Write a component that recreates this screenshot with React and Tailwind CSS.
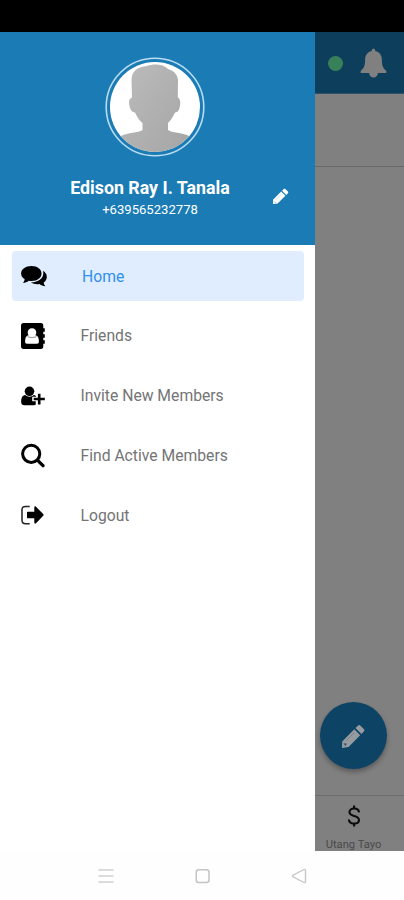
import React from "react";

function Avatar() {
  return (
    <svg className="block h-[102px] w-[102px]" viewBox="0 0 102 102">
      <defs>
        <clipPath id="face">
          <circle cx="51" cy="51" r="45" />
        </clipPath>
        <linearGradient id="grey" x1="0" y1="0" x2="1" y2="0.6">
          <stop offset="0" stopColor="#c0c0c0" />
          <stop offset="0.5" stopColor="#b2b2b2" />
          <stop offset="1" stopColor="#a6a6a6" />
        </linearGradient>
      </defs>
      <circle cx="51" cy="51" r="48.8" fill="none" stroke="#b9dcf2" strokeWidth="1.6" />
      <circle cx="51" cy="51" r="45" fill="#fff" />
      <path
        clipPath="url(#face)"
        fill="url(#grey)"
        d="M28 41.500L27.500 24C27.500 15 34 10.500 43 10C49 7.800 59 7.500 64 13C69 14.500 73.500 18 74 24L73.800 41.500C76.500 42.500 76.800 47 75.500 52C75 55 72.500 56.500 71 56.500C69.500 60 66.500 65 64 67V74C68 77 78 76.500 85 80L102 88V102H0V88L17 80C24 76.500 34 77 38.500 74V67C35.500 65 32.500 60 31 56.500C28 56.500 26 53 25.500 50C24.500 46 25 42.500 28 41.500Z"
      />
    </svg>
  );
}

function CommentsIcon() {
  return (
    <svg className="block h-[22px] w-[27px]" viewBox="0 0 27 22">
      <path d="M10.500 1C16.500 1 20.500 4.300 20.500 8.500S16.500 16 10.500 16C9.500 16 8.600 15.900 7.700 15.700C6 17 4.200 17.800 2 18C2.800 17 3.500 15.800 3.700 14.300C1.400 12.900.1 10.800.1 8.500C.1 4.300 4.500 1 10.500 1Z" />
      <path d="M22 5.800C24.500 7.200 25.800 9.400 25.800 12C25.800 14.200 24.700 16.200 22.700 17.600C22.800 19 23.400 20.200 24.300 21.300C22.100 21.100 20.100 20.300 18.500 19C15.300 19.600 12 18.900 9.800 17.300C16.700 17.600 22.300 13.500 22.300 8.500C22.300 7.500 22.300 6.700 22 5.800Z" />
    </svg>
  );
}

function ContactsIcon() {
  return (
    <svg className="block h-[28px] w-[25px]" viewBox="0 0 25 28">
      <path d="M2.500 1H20C21.500 1 22.300 2 22.300 3.500V6.300H23.800V9.800H22.300V12.300H23.800V15.800H22.300V18.300H23.800V21.800H22.300V24.500C22.300 26 21.500 27 20 27H2.500C1 27 0 26 0 24.500V3.500C0 2 1 1 2.500 1Z" />
      <path fill="#fff" d="M11 6.200C13.700 6.200 15.300 7.900 15.300 10.200C15.300 11.400 15 12.500 14.200 13.300C16.900 13.700 17.900 15.600 17.900 19.500C17.900 21 17.200 21.700 16 21.700H6C4.800 21.700 4.100 21 4.100 19.500C4.100 15.600 5.100 13.700 7.800 13.300C7 12.500 6.700 11.400 6.700 10.200C6.700 7.900 8.300 6.200 11 6.200Z" />
      <path d="M6.500 14.700Q11 16.600 15.500 14.700" fill="none" stroke="#777" strokeWidth=".8" />
    </svg>
  );
}

function InviteIcon() {
  return (
    <svg className="block h-[20px] w-[25px]" viewBox="0 0 25 20">
      <circle cx="8.500" cy="5.300" r="4.800" />
      <path d="M4.200 9C6.800 11.200 10.200 11.200 12.800 9C14 9.200 14.800 9.800 15.200 10.700H11.200V15.300H14.700V18.700C14.300 19 13.700 19.200 13 19.200H3.500C1.300 19.200.2 18.200.2 16C.2 12 1.300 9.300 4.200 9Z" />
      <path d="M16.900 7.800H19.500V11.800H23.800V14.300H19.500V18.500H16.900V14.300H12.700V11.800H16.900Z" />
    </svg>
  );
}

function SearchIcon() {
  return (
    <svg className="block h-[25px] w-[25px]" viewBox="0 0 25 25" fill="none" stroke="#000">
      <circle cx="10.200" cy="10.800" r="8.600" strokeWidth="3" />
      <path d="M16.600 17.300L22 22.700" strokeWidth="3.300" strokeLinecap="round" />
    </svg>
  );
}

function LogoutIcon() {
  return (
    <svg className="block h-[20px] w-[25px]" viewBox="0 0 25 20">
      <path fill="none" stroke="#222" strokeWidth="1.500" d="M8.700 1.400H4.500C2.200 1.400 1 2.600 1 4.800V15.200C1 17.400 2.200 18.700 4.500 18.700H8.700" />
      <path d="M7 6.800H13.300V2.400C13.300 1.300 14.200 1 15 1.800L22.200 9.100C22.700 9.600 22.700 10.300 22.200 10.800L15 18.200C14.200 19 13.300 18.700 13.300 17.600V13.300H7C6.400 13.300 6 12.900 6 12.300V7.800C6 7.200 6.400 6.800 7 6.800Z" />
    </svg>
  );
}

function SmallPencil() {
  return (
    <svg className="block h-[17px] w-[17px]" viewBox="0 0 17 17" fill="#fff">
      <path d="M9.200 3.600L13.400 7.800L5.600 15.600L1.100 16L1 11.700Z" />
      <path d="M10.100 2.700L11.700 1.100C12.200.6 12.900.6 13.400 1.100L15.900 3.600C16.400 4.100 16.400 4.800 15.900 5.300L14.300 6.900Z" />
      <path d="M4 11.700L9.500 6.200" stroke="#a9cfe6" strokeWidth=".6" />
      <path d="M2 13.200L3.900 15.100" stroke="#8dbfdd" strokeWidth=".8" />
    </svg>
  );
}

function FabPencil() {
  return (
    <svg className="block h-[26px] w-[26px]" viewBox="0 0 26 26" fill="#969ba0">
      <path d="M14.300 6.300L20.200 12.200L8.500 24L2 24.900L2.200 18.500Z" />
      <path d="M15.500 5.100L17.900 2.700C18.700 1.900 19.700 1.900 20.500 2.700L23.800 6C24.600 6.800 24.600 7.800 23.800 8.600L21.400 11Z" />
      <path d="M6.500 17.500L14.500 9.500" fill="none" stroke="#607585" strokeWidth=".8" strokeDasharray="2 .8" />
      <path d="M3.300 20.500L6.400 20.300L6 23.300Z" fill="#334f77" />
    </svg>
  );
}

function BellIcon() {
  return (
    <svg className="block h-[30px] w-[27px]" viewBox="0 0 27 30" fill="#808080">
      <path d="M13.500.7C14.500.7 15.200 1.400 15.200 2.400V3.100C19.500 4 21.900 7.200 21.900 12C21.900 18 23.300 20.500 26.300 22.800V24.900H.7V22.800C3.700 20.500 5.100 18 5.100 12C5.100 7.200 7.500 4 11.800 3.100V2.400C11.800 1.400 12.500.7 13.500.7Z" />
      <path d="M9 24.800H18C17.700 27.800 15.900 29.500 13.500 29.500S9.300 27.800 9 24.800Z" />
    </svg>
  );
}

function DollarIcon() {
  return (
    <svg className="block h-[22px] w-[14px] shrink-0" viewBox="0 0 14 22" fill="none" stroke="#0c0c0c" strokeWidth="2.100">
      <path d="M12 7.400C11.900 5 10 3.500 7.100 3.500C4.300 3.500 2.500 4.900 2.500 7C2.500 9.200 4.200 10.200 7 10.900C10 11.600 12 12.700 12 15C12 17.200 10.100 18.600 7.100 18.600C4 18.600 2 17 1.900 14.500" />
      <path d="M7.100.5V3.600M7.100 18.400V21.500" />
    </svg>
  );
}

const items = [
  { label: "Friends", Icon: ContactsIcon, nudge: "" },
  { label: "Invite New Members", Icon: InviteIcon, nudge: "" },
  { label: "Find Active Members", Icon: SearchIcon, nudge: "pt-0.5" },
  { label: "Logout", Icon: LogoutIcon, nudge: "pt-0.5" },
];

function Drawer() {
  return (
    <aside className="flex w-[315px] shrink-0 flex-col bg-white">
      <header className="h-[213px] bg-[#1a7bb5] pt-6 text-white">
        <div className="flex justify-center pr-[6px]">
          <Avatar />
        </div>
        <div className="mt-[19px] flex">
          <div className="ml-[50px] w-[200px] text-center">
            <div className="text-[17.8px] leading-[22px] font-bold whitespace-nowrap">Edison Ray I. Tanala</div>
            <div className="pt-px text-[13.1px] leading-5 whitespace-nowrap">+639565232778</div>
          </div>
          <div className="mt-[11px] ml-[22px]">
            <SmallPencil />
          </div>
        </div>
      </header>
      <nav className="pt-1.5 text-[15.7px] text-[#747474]">
        <div className="mr-[11px] mb-[5px] ml-3 flex h-[50px] items-center rounded bg-[#dfedff] pl-[9px] text-[#2f8fef]">
          <CommentsIcon />
          <span className="ml-[34px] pt-px">Home</span>
        </div>
        {items.map(({ label, Icon, nudge }) => (
          <div key={label} className="flex h-[59.7px] items-center pl-[21px]">
            <span className="w-[59.5px]">
              <Icon />
            </span>
            <span className={nudge}>{label}</span>
          </div>
        ))}
      </nav>
    </aside>
  );
}

function DimmedPage() {
  return (
    <main className="flex flex-1 flex-col overflow-hidden bg-[#808080]">
      <div className="flex h-[62px] shrink-0 items-center border-b border-[#2f5268] bg-[#0d3e5b] pl-[13px]">
        <span className="mt-0.5 h-[15px] w-[15px] rounded-full bg-[#38805a]" />
        <span className="ml-[17px]">
          <BellIcon />
        </span>
      </div>
      <div className="h-[73px] shrink-0 border-b border-[#686868]" />
      <div className="flex flex-1 items-end pb-[26px] pl-[5px]">
        <div className="flex h-[67px] w-[67px] items-center justify-center rounded-full bg-[#0d4466] pr-0.5 shadow-[0_3px_5px_rgba(0,0,0,0.3)]">
          <FabPencil />
        </div>
      </div>
      <div className="flex h-14 shrink-0 flex-col items-center overflow-hidden border-t border-[#6c6c6c] pt-[9px] pr-3">
        <DollarIcon />
        <span className="mt-[9px] shrink-0 text-[11.2px] leading-[18px] whitespace-nowrap text-[#4a4a4a]">Utang Tayo</span>
      </div>
    </main>
  );
}

export default function App() {
  return (
    <div className="flex h-[900px] w-[404px] flex-col overflow-hidden bg-white font-[Roboto,sans-serif]">
      <div className="h-8 shrink-0 bg-black" />
      <div className="flex h-[819px] shrink-0">
        <Drawer />
        <DimmedPage />
      </div>
      <footer className="flex flex-1 items-center justify-between bg-[#fefefe] pr-[97px] pl-[98px]">
        <svg className="h-4 w-4" viewBox="0 0 16 16" stroke="#d0d0d0" strokeWidth="1.600">
          <path d="M.5 2H15.500M.5 8H15.500M.5 14H15.500" />
        </svg>
        <svg className="h-4 w-4" viewBox="0 0 16 16" fill="none" stroke="#c4c4c4" strokeWidth="1.500">
          <rect x="1.200" y="1.700" width="12.800" height="12.800" rx="2.500" />
        </svg>
        <svg className="h-4 w-4" viewBox="0 0 16 16" fill="none" stroke="#c8c8c8" strokeWidth="1.400">
          <path strokeLinejoin="round" d="M13 1.500Q14.500 1 14.500 2.500V13.500Q14.500 15 13 14.500L1.800 8.600Q1 8 1.800 7.400Z" />
        </svg>
      </footer>
    </div>
  );
}
